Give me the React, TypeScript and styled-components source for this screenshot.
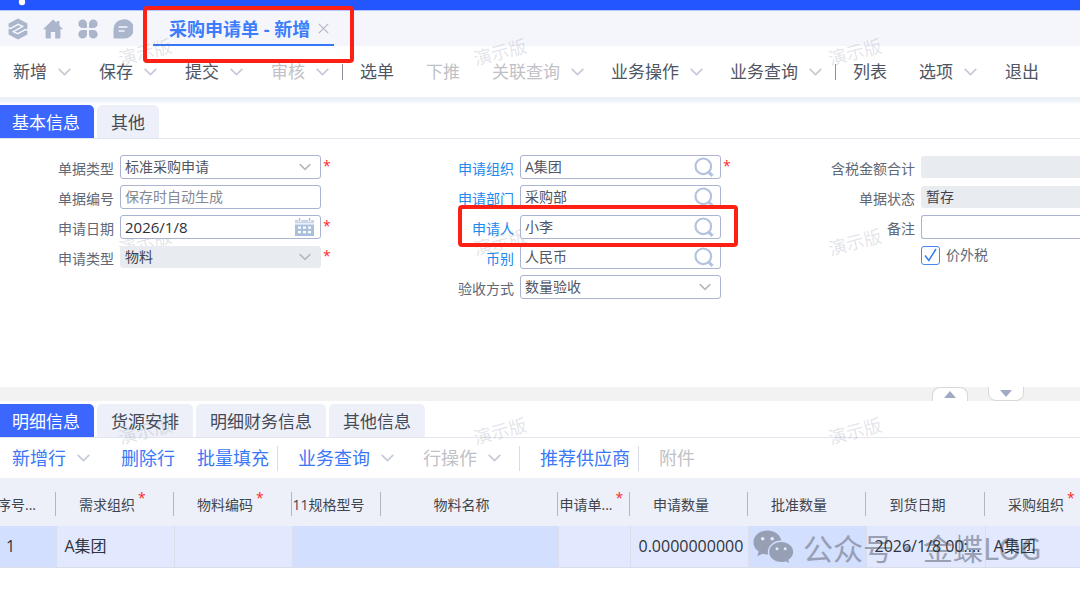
import React from 'react';
import styled, { createGlobalStyle, css } from 'styled-components';

const GlobalStyle = createGlobalStyle`
  *, *::before, *::after { box-sizing: border-box; }
  body {
    margin: 0;
    background: #fff;
    color: #4a505c;
    font-family: "Open Sans", "Noto Sans CJK SC", sans-serif;
    font-size: 14px;
    overflow-x: hidden;
  }
  button, input, select { font: inherit; color: inherit; }
  button { background: none; border: 0; padding: 0; margin: 0; cursor: pointer; }
  svg { display: block; }
`;

const Page = styled.div`
  position: relative;
  min-height: 100vh;
  overflow: hidden;
`;

const TopBar = styled.header`
  height: 11px;
  background: #2456ff;
  border-bottom: 1px solid #b3c4ff;
  padding-left: 18px;
`;

const TabStrip = styled.nav`
  display: flex;
  align-items: center;
  height: 35px;
  padding-left: 8px;
  background: #f5f6fb;
  color: #abb6cd;
`;

const Shortcuts = styled.div`
  display: flex;
  gap: 15px;
  width: 145px;
`;

const PageTab = styled.div`
  position: relative;
  display: flex;
  align-items: center;
  gap: 8px;
  height: 34px;
  padding: 2px 5px 0 16px;
  border-bottom: 2px solid #3577f8;
  color: #3d7dfb;
  font-size: 18px;
  font-weight: 700;
  line-height: 24px;
  white-space: nowrap;
`;

const Highlight = styled.span<{ $inset: string }>`
  position: absolute;
  z-index: 5;
  inset: ${p => p.$inset};
  border: 4px solid #ff2015;
  border-radius: 4px;
  pointer-events: none;
`;

const Toolbar = styled.div`
  display: flex;
  align-items: center;
  height: 51px;
  padding-left: 13px;
  font-size: 17px;
  white-space: nowrap;
`;

const ToolButton = styled.button<{ $tail: number }>`
  display: flex;
  align-items: center;
  flex: none;
  gap: 11px;
  margin-right: ${p => p.$tail}px;
  line-height: 24px;
  color: #4e5563;
  &:disabled { color: #bfc1c6; }
`;

const Divider = styled.i`
  flex: none;
  width: 1px;
  height: 16px;
  margin-right: 17px;
  background: #8d9099;
`;

const Shade = styled.div`
  height: 8px;
  background: linear-gradient(#e8eef7 0, #eef3fa 4px, #fff 7px);
`;

const Tabs = styled.div`
  display: flex;
  gap: 3px;
  height: 34px;
  border-bottom: 1px solid #e2e5ee;
`;

const TabButton = styled.button<{ $active?: boolean }>`
  padding: 2px 14px 0;
  border-radius: 5px 5px 0 0;
  background: #edf0f8;
  color: #444a57;
  font-size: 17px;
  line-height: 24px;
  white-space: nowrap;
  ${p => p.$active && css`
    padding-left: 12px;
    border-top-left-radius: 0;
    background: #3b67ff;
    color: #fff;
  `}
`;

const Form = styled.form`
  display: grid;
  grid-template-columns: 400px 401px minmax(0, 1fr);
  height: 248px;
  padding-top: 16px;
`;

const Column = styled.div`
  display: flex;
  flex-direction: column;
  gap: 6px;
`;

const FieldRow = styled.div`
  display: flex;
  gap: 6px;
  height: 24px;
`;

const Label = styled.label<{ $link?: boolean }>`
  flex: none;
  width: 114px;
  padding-top: 4px;
  text-align: right;
  line-height: 20px;
  color: ${p => (p.$link ? '#2088ee' : '#606875')};
`;

const Box = styled.div<{ $grey?: boolean; $stretch?: boolean }>`
  position: relative;
  z-index: 2;
  display: grid;
  align-items: center;
  flex: ${p => (p.$stretch ? '1' : 'none')};
  width: 201px;
  height: 24px;
  border: 1px solid #aab3d0;
  border-radius: 3px;
  background: #fff;
  color: #4f5664;
  ${p => p.$grey && css`
    height: 22px;
    margin-top: 1px;
    border-color: #e8ebf0;
    background: #e8ebf0;
    color: #3d424c;
  `}
  ${p => p.$stretch && css`
    border-right: 0;
    border-top-right-radius: 0;
    border-bottom-right-radius: 0;
  `}
`;

const controlStyle = css`
  grid-area: 1 / 1;
  width: 100%;
  height: 20px;
  min-width: 0;
  padding: 0 4px;
  border: 0;
  outline: 0;
  background: transparent;
  line-height: 20px;
`;

const TextInput = styled.input<{ $large?: boolean }>`
  ${controlStyle}
  ${p => p.$large && css`font-size: 15px; color: #2b2f38;`}
  &::placeholder { color: #858991; opacity: 1; }
`;

const Select = styled.select`
  ${controlStyle}
  appearance: none;
`;

const BoxIcon = styled.span`
  grid-area: 1 / 1;
  justify-self: end;
  margin-right: 9px;
  pointer-events: none;
`;

const BoxButton = styled.button`
  grid-area: 1 / 1;
  justify-self: end;
  margin-right: 6px;
`;

const Required = styled.span`
  margin-left: -4px;
  color: #ff2a2a;
  font-size: 14px;
  line-height: 22px;
`;

const MarkedArea = styled.div`
  position: relative;
  width: 321px;
`;

const CheckRow = styled.div`
  display: flex;
  align-items: center;
  gap: 6px;
  height: 20px;
  padding-left: 120px;
  line-height: 20px;
  color: #606875;
`;

const CheckFrame = styled.span`
  display: grid;
  place-items: center;
  color: #2f7ff0;
  svg { grid-area: 1 / 1; pointer-events: none; }
`;

const Checkbox = styled.input`
  grid-area: 1 / 1;
  appearance: none;
  width: 19px;
  height: 19px;
  margin: 0;
  border: 1px solid #4a86f5;
  border-radius: 3px;
  background: #fff;
`;

const Splitter = styled.div`
  display: flex;
  justify-content: flex-end;
  gap: 20px;
  height: 14px;
  margin-bottom: 3px;
  padding-right: 56px;
  background: #f2f2f2;
`;

const Handle = styled.button<{ $up?: boolean }>`
  display: grid;
  place-items: center;
  width: 36px;
  height: 14px;
  border: 1px solid #d6d9d9;
  background: #fff;
  ${p => p.$up
    ? css`border-bottom: 0; border-radius: 8px 8px 0 0;`
    : css`border-top: 0; border-radius: 0 0 8px 8px;`}
`;

const LineBar = styled.div`
  display: flex;
  align-items: center;
  height: 40px;
  padding-left: 12px;
  font-size: 18px;
  white-space: nowrap;
`;

const LineButton = styled(ToolButton)`
  color: #3a78f7;
`;

const LineDivider = styled(Divider)`
  height: 25px;
  margin-right: 20px;
  background: #d8dbe8;
`;

const GridArea = styled.div`
  position: relative;
  overflow: hidden;
`;

const Table = styled.table`
  width: 1110px;
  min-width: 100%;
  margin-left: -7px;
  table-layout: fixed;
  border-collapse: collapse;
`;

const HeadCell = styled.th`
  height: 48px;
  padding: 5px 0 0;
  background: linear-gradient(#b4b6bc, #b4b6bc) right 14px / 1px 24px no-repeat #edf0f8;
  color: #40444c;
  font-weight: 400;
  line-height: 20px;
  white-space: nowrap;
`;

const HeadText = styled.span`
  display: flex;
  justify-content: center;
  padding-right: 16px;
`;

const HeadStar = styled.span`
  width: 13px;
  margin-right: -13px;
  padding-left: 3px;
  color: #ff2a2a;
  font-size: 14px;
  line-height: 6px;
  text-align: left;
`;

const Cell = styled.td<{ $dark?: boolean; $right?: boolean }>`
  height: 41px;
  padding: 0 ${p => (p.$right ? 8 : 7)}px 0 8px;
  border-right: 1px solid #dadeea;
  border-bottom: 1px solid #dadeea;
  background: ${p => (p.$dark ? '#d3dfff' : '#e2e9fe')};
  color: #30343c;
  font-size: 16px;
  line-height: 24px;
  text-align: ${p => (p.$right ? 'center' : 'left')};
  white-space: nowrap;
  &:first-child { padding-left: 13px; }
`;

const CellText = styled.span`
  position: relative;
  z-index: 4;
`;

const Account = styled.div`
  position: absolute;
  z-index: 3;
  top: 49px;
  left: 753px;
  display: flex;
  align-items: center;
  gap: 8px;
  height: 40px;
  color: #8d94a8;
  font-family: "Noto Sans CJK SC", sans-serif;
  font-size: 30px;
  line-height: 40px;
  opacity: 0.85;
  white-space: nowrap;
  pointer-events: none;
`;

const Stamp = styled.span<{ $x: number; $y: number }>`
  position: absolute;
  z-index: 1;
  left: ${p => p.$x}px;
  top: ${p => p.$y}px;
  width: 56px;
  font-size: 18px;
  line-height: 24px;
  text-align: center;
  color: rgba(110, 118, 145, 0.2);
  transform: rotate(-15deg);
  white-space: nowrap;
  pointer-events: none;
`;

const Chevron = ({ color = '#c3c9d6', width = 13 }: { color?: string; width?: number }) => (
  <svg width={width} height="8" viewBox="0 0 13 8" fill="none" stroke={color} strokeWidth="1.6">
    <path d="M0.7 0.9 6.5 6.6 12.3 0.9" />
  </svg>
);

const SearchIcon = () => (
  <svg width="20" height="20" viewBox="0 0 20 20" fill="none" stroke="#b3c3df" strokeWidth="2.2">
    <circle cx="9.3" cy="9.3" r="7.8" />
    <path d="M14.4 14.8 18.6 18.8" strokeWidth="3" />
  </svg>
);

const CalendarIcon = () => (
  <svg width="19" height="18" viewBox="0 0 19 18">
    <path d="M0 2H19V5.4H0Z" fill="#c9d6e9" />
    <path d="M3 0.500h3v3.500H3ZM13 0.500h3v3.500h-3Z" fill="#fff" />
    <path d="M3.800 0h1.400v3.600H3.800ZM13.800 0h1.400v3.600h-1.400Z" fill="#a9bcda" />
    <path d="M0 6.500h19V18H0Z" fill="#a9bfde" />
    <path
      d="M3 8.500h3v2.200H3ZM8 8.500h3v2.200H8ZM13 8.500h3v2.200h-3ZM3 13h3v2.200H3ZM8 13h3v2.200H8ZM13 13h3v2.200h-3Z"
      fill="#fff"
    />
  </svg>
);

const LogoIcon = () => (
  <svg width="20" height="22" viewBox="0 0 20 22">
    <path d="M10 0.6 19.400 5.600V16.400L10 21.400 0.600 16.400V5.600Z" fill="currentColor" />
    <path
      d="M0 9.600 2.600 10.400 10.200 6.400 14.600 8.400 5.400 13.600 9.800 15.600 17.400 11.600 20 12.400"
      fill="none"
      stroke="#f5f6fb"
      strokeWidth="1.500"
    />
  </svg>
);

const HomeIcon = () => (
  <svg width="20" height="20" viewBox="0 0 20 20" fill="currentColor">
    <path d="M10 0.4 13.6 3.8V2h2.8v4.5L20 10.2H17.4V18.6a.8.8 0 0 1-.8.8H12.2V13H7.8v6.4H3.4a.8.8 0 0 1-.8-.8V10.2H0Z" />
  </svg>
);

const AppsIcon = () => (
  <svg width="20" height="20" viewBox="0 0 20 20" fill="currentColor">
    <path d="M4.6.4A4.2 4.2 0 0 1 9 4.8V8A1 1 0 0 1 8 9H4.6A4.3 4.3 0 0 1 4.6.4ZM15.4.4A4.2 4.2 0 0 0 11 4.8V8A1 1 0 0 0 12 9H15.4A4.3 4.3 0 0 0 15.4.4ZM4.6 19.6A4.2 4.2 0 0 0 9 15.2V12A1 1 0 0 0 8 11H4.6A4.3 4.3 0 0 0 4.6 19.6ZM15.4 19.6A4.2 4.2 0 0 1 11 15.2V12A1 1 0 0 1 12 11H15.4A4.3 4.3 0 0 1 15.4 19.6Z" />
  </svg>
);

const MessageIcon = () => (
  <svg width="20" height="20" viewBox="0 0 20 20">
    <path d="M10 0.4A9.6 9.6 0 1 1 10 19.4H1.4A.9.9 0 0 1 .5 18.5V10A9.5 9.5 0 0 1 10 .4Z" fill="currentColor" />
    <path d="M5.6 8H14.4M5.6 12H11.6" stroke="#f5f6fb" strokeWidth="1.6" />
  </svg>
);

const CloseIcon = () => (
  <svg width="11" height="11" viewBox="0 0 11 11" stroke="#b3b8c4" strokeWidth="1.2">
    <path d="M0.8 0.8 10.2 10.2M10.2 0.8 0.8 10.2" />
  </svg>
);

const ChatIcon = () => (
  <svg width="42" height="34" viewBox="0 0 42 34">
    <path
      d="M14.5 0.5C6.6.5.5 5.8.5 12.4c0 3.7 2 7 5.2 9.2L4.4 26.3l5-2.6c1.6.5 3.3.7 5.1.7 7.9 0 14-5.3 14-11.9S22.4.5 14.5.5Z"
      fill="currentColor"
    />
    <path
      d="M28.2 11.3c-7.2 0-12.7 4.8-12.7 10.7s5.500 10.700 12.700 10.700c1.500 0 3-.2 4.300-.6l4.700 2-1.200-4c3-2 4.900-4.900 4.900-8.100 0-5.900-5.500-10.700-12.700-10.700Z"
      fill="currentColor"
      stroke="#d3dfff"
      strokeWidth="1.4"
    />
    <g fill="#e6ecff">
      <circle cx="9.7" cy="8.7" r="1.8" />
      <circle cx="19.2" cy="8.7" r="1.8" />
      <circle cx="24" cy="18.7" r="1.5" />
      <circle cx="32.2" cy="18.7" r="1.5" />
    </g>
  </svg>
);

type Tool = { text: string; arrow?: boolean; off?: boolean; tail: number; bar?: boolean };

const tools: Tool[] = [
  { text: '新增', arrow: true, tail: 28 },
  { text: '保存', arrow: true, tail: 28 },
  { text: '提交', arrow: true, tail: 28 },
  { text: '审核', arrow: true, off: true, tail: 13, bar: true },
  { text: '选单', tail: 32 },
  { text: '下推', off: true, tail: 32 },
  { text: '关联查询', arrow: true, off: true, tail: 27 },
  { text: '业务操作', arrow: true, tail: 27 },
  { text: '业务查询', arrow: true, tail: 13, bar: true },
  { text: '列表', tail: 32 },
  { text: '选项', arrow: true, tail: 28 },
  { text: '退出', tail: 0 },
];

const lineTools: Tool[] = [
  { text: '新增行', arrow: true, tail: 31 },
  { text: '删除行', tail: 22 },
  { text: '批量填充', tail: 8, bar: true },
  { text: '业务查询', arrow: true, tail: 29 },
  { text: '行操作', arrow: true, off: true, tail: 18, bar: true },
  { text: '推荐供应商', tail: 8, bar: true },
  { text: '附件', off: true, tail: 0 },
];

type FieldProps = {
  id: string;
  label: string;
  value?: string;
  placeholder?: string;
  kind?: 'text' | 'select' | 'search' | 'date';
  grey?: boolean;
  stretch?: boolean;
  required?: boolean;
};

const Field = ({ id, label, value = '', placeholder, kind = 'text', grey, stretch, required }: FieldProps) => (
  <FieldRow>
    <Label htmlFor={id} $link={kind === 'search'}>{label}</Label>
    <Box $grey={grey} $stretch={stretch}>
      {kind === 'select' ? (
        <>
          <Select id={id} defaultValue={value}>
            <option>{value}</option>
          </Select>
          <BoxIcon><Chevron color="#b4b7bd" width={12} /></BoxIcon>
        </>
      ) : (
        <TextInput
          id={id}
          type="text"
          defaultValue={value}
          placeholder={placeholder}
          readOnly={grey}
          $large={kind === 'date'}
        />
      )}
      {kind === 'search' && <BoxButton type="button" aria-label={`查找${label}`}><SearchIcon /></BoxButton>}
      {kind === 'date' && <BoxButton type="button" aria-label="选择日期"><CalendarIcon /></BoxButton>}
    </Box>
    {required && <Required>*</Required>}
  </FieldRow>
);

const columns = [63, 118, 118, 13, 76, 177, 72, 118, 118, 119, 118];

const heads = [
  { text: '序号...' },
  { text: '需求组织', star: true },
  { text: '物料编码', star: true },
  { text: '11规格型号', span: 2 },
  { text: '物料名称' },
  { text: '申请单...', star: true },
  { text: '申请数量' },
  { text: '批准数量' },
  { text: '到货日期' },
  { text: '采购组织', star: true },
];

const cells = [
  { text: '1', dark: true },
  { text: 'A集团' },
  { text: '' },
  { text: '', dark: true },
  { text: '', dark: true },
  { text: '', dark: true },
  { text: '' },
  { text: '0.0000000000', right: true },
  { text: '', dark: true },
  { text: '2026/1/8 00:...' },
  { text: 'A集团' },
];

const stamps = [40, 230, 419].flatMap(y => [117, 472, 827].map(x => ({ x, y })));

export default function App() {
  return (
    <Page>
      <GlobalStyle />
      <TopBar>
        <svg width="8" height="6" viewBox="0 0 8 6">
          <circle cx="4" cy="2" r="3.2" fill="#fff" />
        </svg>
      </TopBar>
      <TabStrip>
        <Shortcuts>
          <button type="button" aria-label="工作台"><LogoIcon /></button>
          <button type="button" aria-label="首页"><HomeIcon /></button>
          <button type="button" aria-label="应用"><AppsIcon /></button>
          <button type="button" aria-label="消息"><MessageIcon /></button>
        </Shortcuts>
        <PageTab>
          采购申请单 - 新增
          <button type="button" aria-label="关闭"><CloseIcon /></button>
          <Highlight $inset="-6px -20px -19px -10px" />
        </PageTab>
      </TabStrip>
      <Toolbar>
        {tools.map(t => (
          <React.Fragment key={t.text}>
            <ToolButton type="button" disabled={t.off} $tail={t.tail}>
              {t.text}
              {t.arrow && <Chevron />}
            </ToolButton>
            {t.bar && <Divider />}
          </React.Fragment>
        ))}
      </Toolbar>
      <Shade />
      <Tabs>
        <TabButton type="button" $active>基本信息</TabButton>
        <TabButton type="button">其他</TabButton>
      </Tabs>
      <Form>
        <Column>
          <Field id="type" label="单据类型" value="标准采购申请" kind="select" required />
          <Field id="no" label="单据编号" placeholder="保存时自动生成" />
          <Field id="date" label="申请日期" value="2026/1/8" kind="date" required />
          <Field id="category" label="申请类型" value="物料" kind="select" grey required />
        </Column>
        <Column>
          <Field id="org" label="申请组织" value="A集团" kind="search" required />
          <Field id="dept" label="申请部门" value="采购部" kind="search" />
          <MarkedArea>
            <Field id="person" label="申请人" value="小李" kind="search" />
            <Highlight $inset="-10px -17px -8px 58px" />
          </MarkedArea>
          <Field id="currency" label="币别" value="人民币" kind="search" />
          <Field id="check" label="验收方式" value="数量验收" kind="select" />
        </Column>
        <Column>
          <Field id="total" label="含税金额合计" grey stretch />
          <Field id="status" label="单据状态" value="暂存" grey stretch />
          <Field id="note" label="备注" stretch />
          <CheckRow>
            <CheckFrame>
              <Checkbox id="tax" type="checkbox" defaultChecked />
              <svg width="13" height="14" viewBox="0 0 13 14" fill="none" stroke="currentColor" strokeWidth="1.5">
                <path d="M1 7.5 4.8 12.5 12 1" />
              </svg>
            </CheckFrame>
            <label htmlFor="tax">价外税</label>
          </CheckRow>
        </Column>
      </Form>
      <Splitter>
        <Handle type="button" aria-label="收起" $up>
          <svg width="12" height="7" viewBox="0 0 12 7"><path d="M6 0 12 7H0Z" fill="#a2abc5" /></svg>
        </Handle>
        <Handle type="button" aria-label="展开">
          <svg width="12" height="7" viewBox="0 0 12 7"><path d="M0 0H12L6 7Z" fill="#a2abc5" /></svg>
        </Handle>
      </Splitter>
      <Tabs>
        <TabButton type="button" $active>明细信息</TabButton>
        <TabButton type="button">货源安排</TabButton>
        <TabButton type="button">明细财务信息</TabButton>
        <TabButton type="button">其他信息</TabButton>
      </Tabs>
      <LineBar>
        {lineTools.map(t => (
          <React.Fragment key={t.text}>
            <LineButton type="button" disabled={t.off} $tail={t.tail}>
              {t.text}
              {t.arrow && <Chevron />}
            </LineButton>
            {t.bar && <LineDivider />}
          </React.Fragment>
        ))}
      </LineBar>
      <GridArea>
        <Table>
          <colgroup>
            {columns.map((w, i) => <col key={i} width={w} />)}
          </colgroup>
          <thead>
            <tr>
              {heads.map(h => (
                <HeadCell key={h.text} scope="col" colSpan={h.span}>
                  <HeadText>
                    {h.text}
                    {h.star && <HeadStar>*</HeadStar>}
                  </HeadText>
                </HeadCell>
              ))}
            </tr>
          </thead>
          <tbody>
            <tr>
              {cells.map((c, i) => (
                <Cell key={i} $dark={c.dark} $right={c.right}>
                  <CellText>{c.text}</CellText>
                </Cell>
              ))}
            </tr>
          </tbody>
        </Table>
        <Account>
          <ChatIcon />
          <span>公众号·金蝶LOG</span>
        </Account>
      </GridArea>
      {stamps.map(s => <Stamp key={`${s.x}-${s.y}`} $x={s.x} $y={s.y}>演示版</Stamp>)}
    </Page>
  );
}
